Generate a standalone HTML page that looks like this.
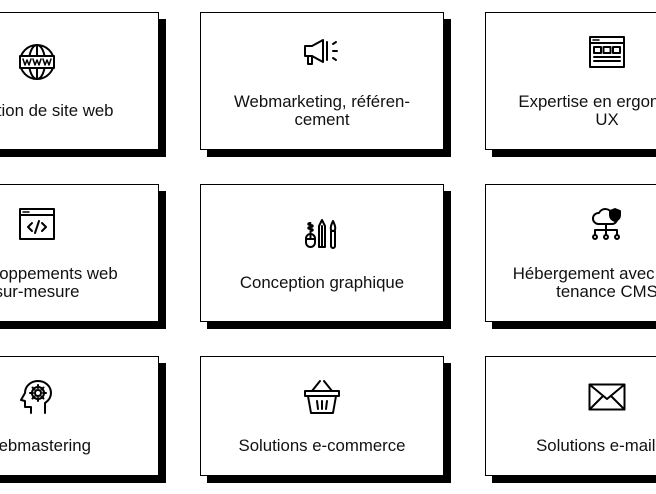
<!DOCTYPE html>
<html><head><meta charset="utf-8"><style>
html,body{margin:0;padding:0;background:#fff;width:656px;height:494px;overflow:hidden;font-family:"Liberation Sans",sans-serif;color:#111}
#w{position:relative;width:656px;height:494px;overflow:hidden}
.c{position:absolute;width:242px;border:1px solid #000;background:#fff;box-shadow:7px 7px 0 #000;box-sizing:content-box}
.ic{position:absolute;left:50%;transform:translate(-50%,-50%)}
.t{position:absolute;left:0;right:0;text-align:center;font-size:16.8px;line-height:18px;white-space:nowrap}
svg{display:block;fill:none;stroke:#000;stroke-width:2;stroke-linecap:round;stroke-linejoin:round}
</style></head><body><div id="w">

<div class="c" style="left:-85px;top:12px;height:136px">
 <svg class="ic" style="top:49px" width="38" height="38" viewBox="0 0 38 38"><circle cx="19" cy="19" r="17"/><ellipse cx="19" cy="19" rx="8" ry="17"/><line x1="19" y1="2" x2="19" y2="36"/><rect x="2" y="13" width="34" height="12" fill="#fff" stroke-width="2"/><path d="M5 16l2 6 2-5 2 5 2-6M15 16l2 6 2-5 2 5 2-6M25 16l2 6 2-5 2 5 2-6" stroke-width="1.5"/></svg>
 <div class="t" style="top:89px">Création de site web</div>
</div>
<div class="c" style="left:200px;top:12px;height:136px">
 <svg class="ic" style="top:39px" width="40" height="28" viewBox="0 0 40 28" stroke-width="2.4"><path d="M3 8h7l11-6v22l-11-6H3z"/><path d="M6 18v8h4v-8"/><path d="M25 4v18"/><path d="M31 6l3-2M31 13h4M31 20l3 2"/></svg>
 <div class="t" style="top:80px">Webmarketing, référen-<br>cement</div>
</div>
<div class="c" style="left:485px;top:12px;height:136px">
 <svg class="ic" style="top:39px" width="36" height="32" viewBox="0 0 36 32"><rect x="1" y="1" width="34" height="30"/><line x1="1" y1="7" x2="35" y2="7"/><path d="M4 4h6" stroke-width="1.5"/><rect x="5" y="11" width="7" height="6"/><rect x="14.5" y="11" width="7" height="6"/><rect x="24" y="11" width="7" height="6"/><path d="M5 21h26M5 25h26"/></svg>
 <div class="t" style="top:80px">Expertise en ergonomie<br>UX</div>
</div>

<div class="c" style="left:-85px;top:184px;height:136px">
 <svg class="ic" style="top:39px" width="36" height="32" viewBox="0 0 36 32"><rect x="1" y="1" width="34" height="30"/><line x1="1" y1="7" x2="35" y2="7"/><path d="M4 4h6" stroke-width="1.5"/><path d="M13 15l-4 4 4 4M23 15l4 4-4 4M20 13l-4 12"/></svg>
 <div class="t" style="top:80px">Développements web<br>sur-mesure</div>
</div>
<div class="c" style="left:200px;top:184px;height:136px">
 <svg class="ic" style="top:48px" width="34" height="32" viewBox="0 0 34 32" stroke-width="1.6"><rect x="1" y="17" width="9" height="13" rx="4.5"/><path d="M5.5 17v5M1 22h9"/><path d="M5.5 17v-3c3 0 3-2 0-2s-3-2 0-2 3-2 0-2-3-2 0-2"/><path d="M14 9l3-6 3 6v21h-6z"/><path d="M17 9v21"/><path d="M26 14v15a2 2 0 0 0 4 0V14zM28 14c-3 0-3-4 0-10 3 6 3 10 0 10z"/></svg>
 <div class="t" style="top:89px">Conception graphique</div>
</div>
<div class="c" style="left:485px;top:184px;height:136px">
 <svg class="ic" style="top:39px" width="34" height="36" viewBox="0 0 34 36" stroke-width="1.8"><path d="M8 18h14a5 5 0 0 0 0-10 7 7 0 0 0-13-1 5 5 0 0 0-1 11z"/><path d="M25 3l5 2v4c0 3-2 5-5 6-3-1-5-3-5-6V5z" fill="#000"/><path d="M16 18v6M5 24h22M5 24v5M16 24v5M27 24v5"/><circle cx="5" cy="31" r="2"/><circle cx="16" cy="31" r="2"/><circle cx="27" cy="31" r="2"/></svg>
 <div class="t" style="top:80px">Hébergement avec main-<br>tenance CMS</div>
</div>

<div class="c" style="left:-85px;top:356px;height:118px">
 <svg class="ic" style="top:40px" width="36" height="36" viewBox="0 0 36 36" stroke-width="1.8"><path d="M12 34v-6H6v-6l-4-1 4-7c0-7 6-12 13-12s13 5 13 12c0 5-3 8-6 10v10"/><circle cx="19" cy="14" r="3"/><path d="M19 6v3M19 19v3M11 14h3M24 14h3M13.5 8.5l2 2M22.5 17.5l2 2M13.5 19.5l2-2M22.5 10.5l2-2"/><circle cx="19" cy="14" r="6"/></svg>
 <div class="t" style="top:80px">Webmastering</div>
</div>
<div class="c" style="left:200px;top:356px;height:118px">
 <svg class="ic" style="top:40px" width="38" height="36" viewBox="0 0 38 36"><path d="M9 12l8-10M29 12l-8-10"/><rect x="2" y="12" width="34" height="5"/><path d="M5 17l3 17h22l3-17"/><path d="M14 22l1 8M19 22v8M24 22l-1 8"/></svg>
 <div class="t" style="top:80px">Solutions e-commerce</div>
</div>
<div class="c" style="left:485px;top:356px;height:118px">
 <svg class="ic" style="top:40px" width="38" height="28" viewBox="0 0 38 28" stroke-width="2"><rect x="1.5" y="1.5" width="35" height="25"/><path d="M1.5 1.5L19 16 36.5 1.5M1.5 26.5l13-13M36.5 26.5l-13-13"/></svg>
 <div class="t" style="top:80px">Solutions e-mailing</div>
</div>
</div></body></html>
